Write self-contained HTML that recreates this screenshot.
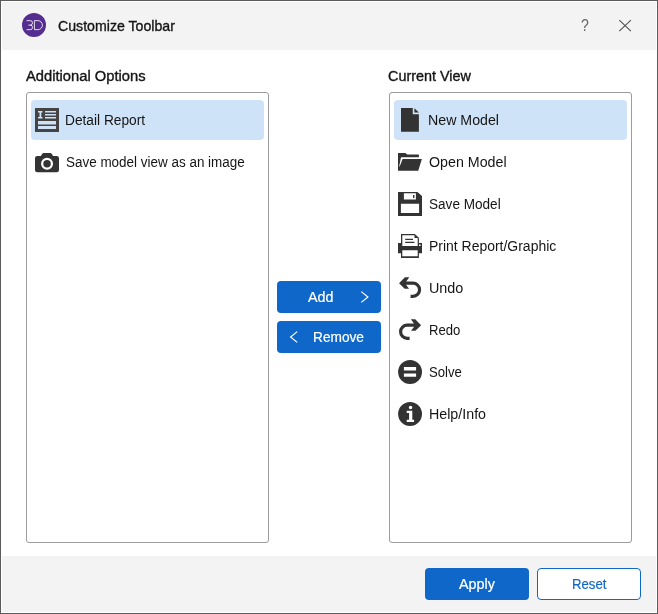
<!DOCTYPE html>
<html><head><meta charset="utf-8">
<style>
*{box-sizing:border-box;margin:0;padding:0}
html,body{width:658px;height:614px;overflow:hidden;background:#fff}
body{font-family:"Liberation Sans",sans-serif;color:#111;position:relative}
.frame{position:absolute;left:0;top:0;width:658px;height:614px;border:1px solid #5b5b5b;box-shadow:inset 0 0 0 1px #fff;z-index:10}
.title{position:absolute;left:0;top:0;width:658px;height:50px;background:#f3f3f3}
.footer{position:absolute;left:0;top:556px;width:658px;height:58px;background:#f3f3f3}
.t{position:absolute;line-height:18px;white-space:nowrap;transform-origin:0 0}
.layer{position:absolute;left:0;top:0;width:658px;height:614px;will-change:transform}
.list{position:absolute;top:92px;width:243px;height:451px;border:1px solid #9b9ba0;border-radius:3px;background:#fff}
.sel{position:absolute;top:100px;width:233px;height:40px;border-radius:4px;background:#cfe3f8}
.ic{position:absolute;width:24px;height:24px}
.btn{position:absolute;width:104px;height:32px;border-radius:4px;background:#0f68c9}
.btn.out{background:#fff;border:1px solid #0f68c9}
svg{position:absolute;overflow:visible}
</style></head><body>
<div class="title"></div>
<div class="footer"></div>
<div class="layer">
<svg style="left:22.05px;top:12.7px;width:24px;height:24px" viewBox="0 0 24 24"><circle cx="12" cy="12" r="12" fill="#552d90"/><g fill="none" stroke="#fff" stroke-opacity="0.92" stroke-width="0.9"><path d="M4.6 7.65H8.3A2.2 2.2 0 0 1 8.3 12.1H6.4M8.3 12.1A2.27 2.27 0 0 1 8.3 16.65H4.6"/><path d="M12.4 7.65V16.65H15.9A4.5 4.5 0 0 0 15.9 7.65Z"/></g></svg>
<div class="t" style="left:58.00px;top:17.00px;font-size:15px;letter-spacing:0.000px;transform:scaleX(0.9431);-webkit-text-stroke:0.35px #151515;color:#151515;">Customize Toolbar</div>
<div class="t" style="left:581.40px;top:17.30px;font-size:16px;letter-spacing:0.000px;transform:scaleX(0.8800);-webkit-text-stroke:0px #666;color:#666;">?</div>
<svg style="left:619px;top:20px" width="13" height="12" viewBox="0 0 13 12"><path d="M0.3 0.1L11.9 11.1M11.9 0.1L0.3 11.1" stroke="#555" stroke-width="1.15" fill="none"/></svg>
<div class="t" style="left:26.00px;top:67.00px;font-size:14px;letter-spacing:0.000px;transform:scaleX(1.0521);-webkit-text-stroke:0.35px #151515;color:#151515;">Additional Options</div>
<div class="t" style="left:388.00px;top:67.00px;font-size:14px;letter-spacing:0.000px;transform:scaleX(1.0269);-webkit-text-stroke:0.35px #151515;color:#151515;">Current View</div>
<div class="list" style="left:26px"></div>
<div class="list" style="left:389px"></div>
<div class="sel" style="left:31px"></div>
<div class="sel" style="left:394px"></div>
<svg class="ic" style="left:35px;top:108px" viewBox="0 0 24 24"><path fill-rule="evenodd" fill="#444" d="M0 0H24V24H0ZM3 3H7.5V4.4H6.3V9.1H7.5V10.5H3V9.1H4.5V4.4H3ZM10 3H21V4.5H10ZM10 6H21V7.5H10ZM10 9H21V10.5H10ZM3 13H21V16.5H3ZM3 18H21V21H3Z"/></svg><div class="t" style="left:65.00px;top:111.00px;font-size:14px;letter-spacing:0.000px;transform:scaleX(0.9807);-webkit-text-stroke:0px #151515;color:#151515;">Detail Report</div>
<svg class="ic" style="left:35px;top:150px" viewBox="0 0 24 24"><path fill-rule="evenodd" fill="#333" d="M2.3 5.9H5.9L7.1 3.9Q7.7 3 8.8 3H15.2Q16.3 3 16.9 3.9L18.1 5.9H21.7Q24 5.9 24 8.2V20Q24 22.3 21.7 22.3H2.3Q0 22.3 0 20V8.2Q0 5.9 2.3 5.9ZM12.05 7.8A6 6 0 1 0 12.05 19.8A6 6 0 1 0 12.05 7.8ZM12.05 10.05A3.75 3.75 0 1 0 12.05 17.55A3.75 3.75 0 1 0 12.05 10.05Z"/></svg><div class="t" style="left:66.00px;top:153.00px;font-size:14px;letter-spacing:0.000px;transform:scaleX(0.9612);-webkit-text-stroke:0px #151515;color:#151515;">Save model view as an image</div>
<svg class="ic" style="left:398px;top:108px" viewBox="0 0 24 24"><path fill="#333" d="M3 0H14.75V6.15H20.9V23.8H3ZM16.4 0.2L20.9 4.4H16.4Z"/></svg><div class="t" style="left:428.00px;top:111.00px;font-size:14px;letter-spacing:0.000px;transform:scaleX(1.0133);-webkit-text-stroke:0px #151515;color:#151515;">New Model</div>
<svg class="ic" style="left:398px;top:150px" viewBox="0 0 24 24"><path fill="#333" d="M0 3H7.2L9.3 4.6H20.9V7.2H3L1.25 16L1.5 17L0 20.7ZM4.6 9H23.9L20.2 20.7H0Z"/></svg><div class="t" style="left:429.00px;top:153.00px;font-size:14px;letter-spacing:0.000px;transform:scaleX(1.0172);-webkit-text-stroke:0px #151515;color:#151515;">Open Model</div>
<svg class="ic" style="left:398px;top:192px" viewBox="0 0 24 24"><path fill-rule="evenodd" fill="#333" d="M0 0H19.4L24 4.1V24H0ZM5.9 1.2H17.9V7.5H5.9ZM15 3H16.4V5.9H15ZM2.9 11.8H21.1V21H2.9Z"/></svg><div class="t" style="left:429.00px;top:195.00px;font-size:14px;letter-spacing:0.000px;transform:scaleX(0.9691);-webkit-text-stroke:0px #151515;color:#151515;">Save Model</div>
<svg class="ic" style="left:398px;top:234px" viewBox="0 0 24 24"><path fill-rule="evenodd" fill="#333" d="M3 0H16.8L20.9 3.8V9H24V19.2H20.9V23.9H3V19.2H0V9H3ZM4.3 1.25H16.5V3.9H19.7V12.1H4.3ZM7.2 4.7H15V5.9H7.2ZM7.2 7.7H16.4V8.9H7.2ZM21 10.6H22.6V12H21ZM4.3 16.3H19.7V22.3H4.3Z"/></svg><div class="t" style="left:429.00px;top:237.00px;font-size:14px;letter-spacing:0.000px;transform:scaleX(0.9972);-webkit-text-stroke:0px #151515;color:#151515;">Print Report/Graphic</div>
<svg class="ic" style="left:398px;top:276px" viewBox="0 0 24 24"><path fill="#333" d="M1.05 7.15L6.9 1.2H11.3L8.2 5.6V8.9L11.1 12.8H6.7Z"/><path fill="none" stroke="#333" stroke-width="3.2" d="M8 7.2H14.95A6.6 6.6 0 0 1 14.95 20.4H12.55"/></svg><div class="t" style="left:429.00px;top:279.00px;font-size:14px;letter-spacing:0.000px;transform:scaleX(1.0261);-webkit-text-stroke:0px #151515;color:#151515;">Undo</div>
<svg class="ic" style="left:398px;top:318px" viewBox="0 0 24 24"><g transform="translate(24.15 0) scale(-1 1)"><path fill="#333" d="M1.05 7.15L6.9 1.2H11.3L8.2 5.6V8.9L11.1 12.8H6.7Z"/><path fill="none" stroke="#333" stroke-width="3.2" d="M8 7.2H14.95A6.6 6.6 0 0 1 14.95 20.4H12.55"/></g></svg><div class="t" style="left:429.00px;top:321.00px;font-size:14px;letter-spacing:0.000px;transform:scaleX(0.9359);-webkit-text-stroke:0px #151515;color:#151515;">Redo</div>
<svg class="ic" style="left:398px;top:360px" viewBox="0 0 24 24"><path fill-rule="evenodd" fill="#333" d="M12.05 0.05A11.95 11.95 0 1 0 12.05 23.95A11.95 11.95 0 1 0 12.05 0.05ZM5.9 7.1H18.1V10.5H5.9ZM5.9 13.45H18.1V16.85H5.9Z"/></svg><div class="t" style="left:429.00px;top:363.00px;font-size:14px;letter-spacing:0.000px;transform:scaleX(0.9378);-webkit-text-stroke:0px #151515;color:#151515;">Solve</div>
<svg class="ic" style="left:398px;top:402px" viewBox="0 0 24 24"><path fill-rule="evenodd" fill="#333" d="M12.05 0.05A11.95 11.95 0 1 0 12.05 23.95A11.95 11.95 0 1 0 12.05 0.05ZM12.55 3.75A1.75 1.75 0 1 0 12.55 7.25A1.75 1.75 0 1 0 12.55 3.75ZM8.75 8.85H14.3V17.75H16.05V20H8.75V17.75H11.1V11.1H8.75Z"/></svg><div class="t" style="left:429.00px;top:405.00px;font-size:14px;letter-spacing:0.000px;transform:scaleX(1.0173);-webkit-text-stroke:0px #151515;color:#151515;">Help/Info</div>
<div class="btn" style="left:277px;top:281px"></div>
<div class="btn" style="left:277px;top:321px"></div>
<div class="t" style="left:308.00px;top:288.00px;font-size:14px;letter-spacing:0.000px;transform:scaleX(1.0195);-webkit-text-stroke:0.2px #fff;color:#fff;">Add</div>
<div class="t" style="left:313.00px;top:328.00px;font-size:14px;letter-spacing:0.000px;transform:scaleX(0.9781);-webkit-text-stroke:0.2px #fff;color:#fff;">Remove</div>
<svg style="left:361px;top:291px" width="8" height="12" viewBox="0 0 8 12"><path d="M0.3 0.6L6.9 6L0.3 11.4" stroke="#fff" stroke-width="1.2" fill="none"/></svg>
<svg style="left:289.5px;top:331px" width="8" height="12" viewBox="0 0 8 12"><path d="M7.2 0.6L0.6 6L7.2 11.4" stroke="#fff" stroke-width="1.2" fill="none"/></svg>
<div class="btn" style="left:425px;top:568px"></div>
<div class="btn out" style="left:537px;top:568px"></div>
<div class="t" style="left:459.00px;top:575.00px;font-size:14px;letter-spacing:0.000px;transform:scaleX(1.0244);-webkit-text-stroke:0.2px #fff;color:#fff;">Apply</div>
<div class="t" style="left:572.00px;top:575.00px;font-size:14px;letter-spacing:0.000px;transform:scaleX(0.9396);-webkit-text-stroke:0.2px #0f68c9;color:#0f68c9;">Reset</div>
</div>
<div class="frame"></div>
</body></html>
